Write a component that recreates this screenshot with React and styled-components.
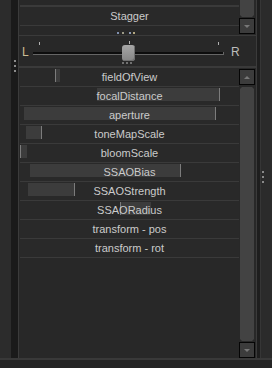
import React from 'react';
import styled, { createGlobalStyle } from 'styled-components';

const GlobalStyle = createGlobalStyle`
  html, body {
    margin: 0;
    padding: 0;
    background: #252525;
  }
`;

const Page = styled.div`
  width: 272px;
  height: 368px;
  display: flex;
  flex-direction: column;
  background: #252525;
  font-family: 'Liberation Sans', Arial, sans-serif;
  font-size: 11px;
  color: #cbcbcb;
  overflow: hidden;
`;

const Frame = styled.div`
  height: 358px;
  display: flex;
  border-bottom: 2px solid #393939;
`;

const LeftStrip = styled.div`
  width: 11px;
  background: #2c2c2c;
`;

const Splitter = styled.div`
  width: 7px;
  background: #1a1a1a;
  display: flex;
  flex-direction: column;
  gap: 3px;
  padding-top: ${(p) => p.$top}px;
  padding-left: ${(p) => p.$left}px;
  box-sizing: border-box;
`;

const Dot = styled.span`
  width: 2px;
  height: 2px;
  background: #8a8a8a;
`;

const Panel = styled.div`
  width: 239px;
  box-sizing: border-box;
  border-left: 1px solid #3b3b3b;
  border-right: 1px solid #3b3b3b;
  background: #282828;
  display: flex;
  flex-direction: column;
`;

const RightGap = styled.div`
  width: 3px;
  background: #1e1e1e;
`;

const RightStrip = styled.div`
  flex: 1;
  background: #2b2b2b;
  border-left: 1px solid #363636;
  display: flex;
  flex-direction: column;
  gap: 3px;
  padding-top: 171px;
  padding-left: 1px;
`;

const Section = styled.div`
  display: flex;
  height: ${(p) => (p.$h ? `${p.$h}px` : 'auto')};
  flex: ${(p) => (p.$grow ? 1 : 'none')};
  border-bottom: ${(p) => p.$border || 0}px solid #3a3a3a;
  padding-left: 1px;
  overflow: hidden;
`;

const List = styled.div`
  width: 219px;
  display: flex;
  flex-direction: column;
`;

const Spacer = styled.div`
  height: ${(p) => p.$h}px;
  flex: none;
  background: ${(p) => p.$bg || 'transparent'};
`;

const Row = styled.div`
  position: relative;
  flex: none;
  height: 18px;
  line-height: 18px;
  border-bottom: 1px solid #3a3a3a;
  text-align: center;
  background: #292929;
`;

const RowLabel = styled.span`
  position: relative;
  white-space: nowrap;
`;

const ValueBar = styled.div`
  position: absolute;
  top: 1px;
  height: 13px;
  box-sizing: border-box;
  background: #3c3c3c;
  border-${(p) => p.$edge}: 1px solid #7c7c7c;
`;

const ClippedMarks = styled.div`
  height: 9px;
  flex: none;
  position: relative;
`;

const Mark = styled.span`
  position: absolute;
  top: 6px;
  width: 2px;
  height: 2px;
  background: ${(p) => p.$c};
`;

const ScrollCol = styled.div`
  width: 17px;
  display: flex;
  flex-direction: column;
  padding-top: ${(p) => p.$top || 0}px;
  box-sizing: border-box;
`;

const ScrollThumb = styled.div`
  width: 14px;
  margin-left: 1px;
  flex: none;
  height: ${(p) => p.$h}px;
  margin-bottom: ${(p) => p.$gap}px;
  margin-top: ${(p) => p.$gapTop || 0}px;
  background: #434343;
  clip-path: polygon(${(p) => (p.$capTop ? '0 2px, 2px 0, calc(100% - 2px) 0, 100% 2px' : '0 0, 100% 0')}, 100% calc(100% - 2px), calc(100% - 2px) 100%, 2px 100%, 0 calc(100% - 2px));
`;

const ScrollButton = styled.div`
  width: 16px;
  height: 16px;
  flex: none;
  box-sizing: border-box;
  border: 1px solid #050505;
  background: #3c3c3c;
  display: flex;
  align-items: center;
  justify-content: center;

  &::after {
    content: '';
    width: 0;
    height: 0;
    border-left: 3px solid transparent;
    border-right: 3px solid transparent;
    border-${(p) => (p.$dir === 'up' ? 'bottom' : 'top')}: 3px solid #787878;
  }
`;

const SliderRow = styled.div`
  display: flex;
  align-items: center;
  flex: none;
  height: 30px;
  padding-left: 3px;
  border-bottom: 2px solid #3a3a3a;
`;

const SideLabel = styled.span`
  width: ${(p) => p.$w}px;
  margin-left: ${(p) => p.$ml || 0}px;
  margin-top: 2px;
  font-size: 12px;
  color: ${(p) => p.$c};
`;

const Track = styled.div`
  position: relative;
  width: 191px;
  height: 30px;
`;

const Groove = styled.div`
  position: absolute;
  top: 16px;
  left: 0;
  right: 0;
  height: 2px;
  background: #0d0d0d;
  border-bottom: 1px solid #666;
  border-right: 1px solid #666;
`;

const Tick = styled.span`
  position: absolute;
  top: ${(p) => p.$top}px;
  width: 1px;
  height: 3px;
  background: #b0b0b0;
`;

const Thumb = styled.div`
  position: absolute;
  top: 9px;
  left: 89px;
  width: 13px;
  height: 16px;
  border-radius: 3px;
  background: linear-gradient(#a6a6a6, #858585);
  box-shadow: inset -1px -1px 0 #6e6e6e;
`;

const GripDots = styled.div`
  position: absolute;
  top: 26px;
  left: 89px;
  display: flex;
  gap: 2px;
`;

const GripDot = styled.span`
  width: 2px;
  height: 2px;
  background: #707070;
`;

const rows = [
  { name: 'fieldOfView', left: 35, width: 5, edge: 'left' },
  { name: 'focalDistance', left: 77, width: 123, edge: 'right' },
  { name: 'aperture', left: 4, width: 192, edge: 'right' },
  { name: 'toneMapScale', left: 6, width: 16, edge: 'right' },
  { name: 'bloomScale', left: 0, width: 7, edge: 'left' },
  { name: 'SSAOBias', left: 10, width: 151, edge: 'right' },
  { name: 'SSAOStrength', left: 8, width: 47, edge: 'right' },
  { name: 'SSAORadius', left: 100, width: 31, edge: 'left' },
  { name: 'transform - pos' },
  { name: 'transform - rot' },
];

const marks = [
  { x: 97, c: '#7f8fae' },
  { x: 102, c: '#9c9a86' },
  { x: 109, c: '#8a98b4' },
  { x: 113, c: '#b4a880' },
];

function App() {
  return (
    <Page>
      <GlobalStyle />
      <Frame>
        <LeftStrip />
        <Splitter $top={60} $left={3}>
          <Dot />
          <Dot />
          <Dot />
        </Splitter>
        <Panel>
          <Section $h={35} $border={1}>
            <List>
              <Spacer $h={5} />
              <Spacer $h={2} $bg="#3a3a3a" />
              <Row>
                <RowLabel>Stagger</RowLabel>
              </Row>
              <ClippedMarks>
                {marks.map((m) => (
                  <Mark key={m.x} $c={m.c} style={{ left: m.x }} />
                ))}
              </ClippedMarks>
            </List>
            <ScrollCol>
              <ScrollThumb $h={17} $gap={1} />
              <ScrollButton $dir="down" />
            </ScrollCol>
          </Section>

          <SliderRow>
            <SideLabel $w={11} $c="#cbbd94">L</SideLabel>
            <Track>
              <Tick $top={6} style={{ left: 6 }} />
              <Tick $top={5} style={{ left: 96 }} />
              <Tick $top={6} style={{ left: 185 }} />
              <Groove />
              <Thumb />
              <GripDots>
                <GripDot />
                <GripDot />
                <GripDot />
              </GripDots>
            </Track>
            <SideLabel $w={10} $ml={7} $c="#bdbdbd">R</SideLabel>
          </SliderRow>

          <Section $grow>
            <List>
              {rows.map((r) => (
                <Row key={r.name}>
                  {r.width && (
                    <ValueBar $edge={r.edge} style={{ left: r.left, width: r.width }} />
                  )}
                  <RowLabel>{r.name}</RowLabel>
                </Row>
              ))}
            </List>
            <ScrollCol $top={1}>
              <ScrollButton $dir="up" />
              <ScrollThumb $capTop $h={254} $gapTop={2} $gap={1} />
              <ScrollButton $dir="down" />
            </ScrollCol>
          </Section>
        </Panel>
        <RightGap />
        <RightStrip>
          <Dot />
          <Dot />
          <Dot />
        </RightStrip>
      </Frame>
    </Page>
  );
}

export default App;
